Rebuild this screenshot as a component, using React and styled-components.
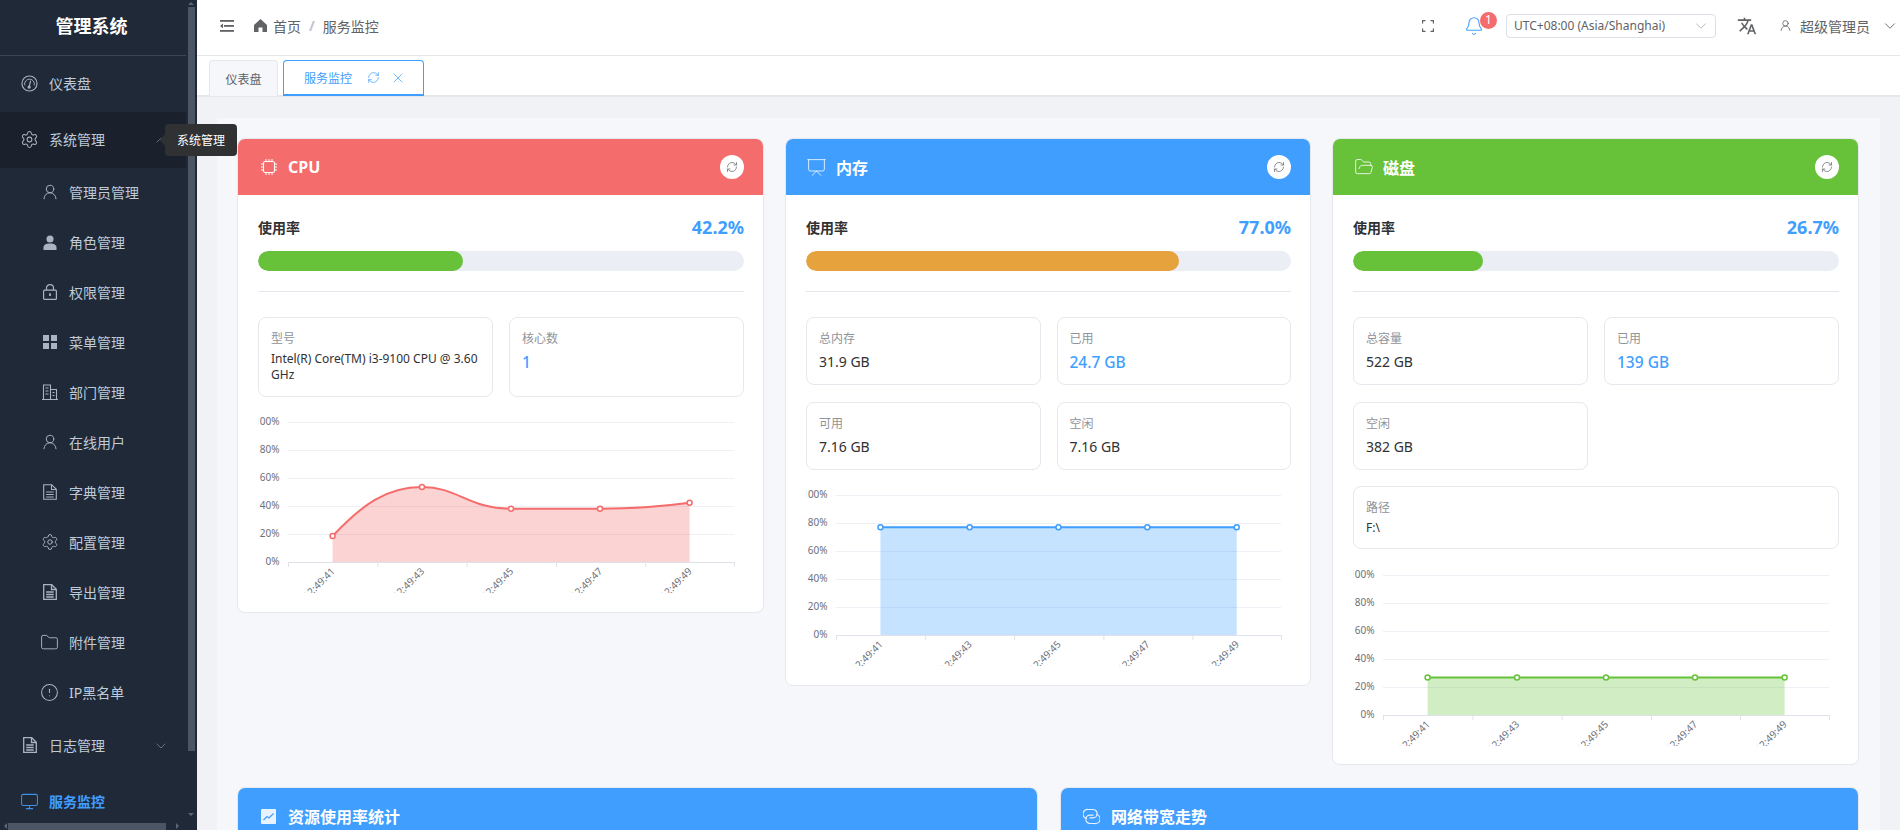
import React from "react";
import styled, { createGlobalStyle } from "styled-components";
import {
  Settings, UserRound, Folder, FolderOpen, CircleAlert, Monitor, RefreshCw, X,
  ChevronDown, ChevronUp, Bell, Presentation,
} from "lucide-react";
import { MdTranslate } from "react-icons/md";

const Global = createGlobalStyle`
  html, body { margin: 0; padding: 0; height: 100%; overflow: hidden; background: #fff; }
  body { font-family: "Noto Sans", "Noto Sans CJK SC", sans-serif; font-size: 14px; color: #303133; }
  * { box-sizing: border-box; }
`;

const Shell = styled.div`
  display: grid;
  grid-template-columns: 197px 1fr;
  width: 1900px;
  height: 830px;
  overflow: hidden;
`;

const Sidebar = styled.aside`
  position: relative;
  background: #1f2937;
  height: 830px;
  z-index: 2;
`;
const SideInner = styled.div`
  width: 186px;
  height: 830px;
  overflow: hidden;
`;
const Logo = styled.div`
  height: 56px;
  border-bottom: 1px solid #3b4653;
  display: flex;
  align-items: center;
  justify-content: center;
  padding: 0 3px 5px 0;
  color: #fff;
  font-size: 18px;
  font-weight: 700;
`;
const MenuRow = styled.div`
  display: flex;
  align-items: center;
  height: ${(p) => (p.$sub ? 50 : 56)}px;
  padding-left: ${(p) => (p.$sub ? 42 : 21)}px;
  padding-bottom: 2px;
  gap: ${(p) => (p.$sub ? 12 : 11)}px;
  color: ${(p) => (p.$active ? "#409eff" : "#bfcbd9")};
  font-weight: ${(p) => (p.$active ? 600 : 400)};
  background: ${(p) => (p.$open ? "#1a212d" : "transparent")};
  font-size: 14px;
  white-space: nowrap;
  position: relative;
`;
const RowIcon = styled.span`
  display: inline-flex;
  align-items: center;
  justify-content: center;
  width: ${(p) => (p.$sub ? 15 : 17)}px;
  height: 18px;
  flex: none;
  color: ${(p) => (p.$active ? "#3f8fe6" : "#aab4c0")};
  & > svg {
    flex: none;
  }
`;
const Caret = styled.span`
  position: absolute;
  left: 153px;
  top: 50%;
  transform: translateY(-50%);
  display: inline-flex;
  color: #8b95a3;
`;
const VBar = styled.div`
  position: absolute;
  left: 188px;
  top: 7px;
  width: 7px;
  height: 744px;
  background: #4b5563;
`;
const HBar = styled.div`
  position: absolute;
  left: 8px;
  bottom: 0;
  width: 158px;
  height: 7px;
  background: #4b5563;
`;
const Arrow = styled.span`
  position: absolute;
  width: 0;
  height: 0;
  border: 3px solid transparent;
  left: ${(p) => p.$x}px;
  top: ${(p) => p.$y}px;
  ${(p) => `border-${p.$dir}-color: #5b6573;`}
`;
const Tip = styled.div`
  position: absolute;
  left: 165px;
  top: 124px;
  width: 72px;
  height: 32px;
  background: #303133;
  color: #fff;
  font-size: 12px;
  border-radius: 4px;
  display: flex;
  align-items: center;
  justify-content: center;
  &::before {
    content: "";
    position: absolute;
    left: -4px;
    top: 12px;
    width: 8px;
    height: 8px;
    background: #303133;
    transform: rotate(45deg);
  }
`;

const Main = styled.main`
  display: flex;
  flex-direction: column;
  min-width: 0;
  height: 830px;
`;
const Navbar = styled.header`
  height: 56px;
  flex: none;
  border-bottom: 1px solid #e5e7eb;
  background: #fff;
  display: flex;
  align-items: center;
  padding: 0 0 4px 23px;
  color: #606266;
`;
const Crumbs = styled.div`
  display: flex;
  align-items: center;
  margin-left: 20px;
  font-size: 14px;
  color: #606266;
`;
const CrumbHome = styled.span`
  display: inline-flex;
  align-items: center;
  gap: 6px;
`;
const Slash = styled.span`
  margin: 0 8px;
  color: #c0c4cc;
  font-weight: 700;
`;
const NavRight = styled.div`
  margin-left: auto;
  display: flex;
  align-items: center;
  padding-right: 1px;
  height: 100%;
`;
const BellWrap = styled.span`
  position: relative;
  display: inline-flex;
  margin-left: 30px;
  color: #409eff;
`;
const Badge = styled.span`
  position: absolute;
  left: 16px;
  top: -4px;
  width: 17px;
  height: 17px;
  border-radius: 50%;
  background: #f56c6c;
  color: #fff;
  font-size: 12px;
  line-height: 16px;
  text-align: center;
`;
const TzSelect = styled.div`
  width: 210px;
  height: 24px;
  margin-left: 22px;
  border: 1px solid #dcdfe6;
  border-radius: 4px;
  display: flex;
  align-items: center;
  justify-content: space-between;
  padding: 0 5px 0 7px;
  font-size: 12px;
  color: #606266;
`;
const Lang = styled.span`
  display: inline-flex;
  margin-left: 21px;
  color: #606266;
`;
const UserBox = styled.div`
  display: flex;
  align-items: center;
  margin-left: 22px;
  font-size: 14px;
  color: #606266;
  gap: 8px;
`;
const TabBar = styled.div`
  height: 41px;
  flex: none;
  background: #fff;
  border-bottom: 2px solid #e5e7eb;
  display: flex;
  align-items: flex-start;
  gap: 5px;
  padding: 4px 0 0 12px;
`;
const Tab = styled.div`
  height: 36px;
  display: flex;
  align-items: center;
  font-size: 12px;
  border-radius: 4px 4px 0 0;
  ${(p) =>
    p.$active
      ? `
    width: 141px; padding-left: 20px; color: #409eff; background: #fff;
    border: 1px solid #409eff; border-bottom-width: 2px; gap: 0;
  `
      : `
    width: 69px; justify-content: center; color: #606266; background: #f5f7fa;
    border: 1px solid #e5e7eb; border-bottom: none;
  `}
`;
const TabIcons = styled.span`
  display: inline-flex;
  align-items: center;
  gap: 10px;
  margin-left: 15px;
`;
const Content = styled.div`
  flex: 1;
  min-height: 0;
  overflow: hidden;
  background: #f0f2f5;
  padding: 21px 20px 0;
`;
const Panel = styled.div`
  background: #f5f7fa;
  padding: 20px 21px 20px 20px;
`;
const Row3 = styled.div`
  display: grid;
  grid-template-columns: 527fr 526fr 527fr;
  gap: 21px;
  align-items: start;
`;
const Row2 = styled.div`
  display: grid;
  grid-template-columns: 801fr 799fr;
  gap: 22px;
  margin-top: 22px;
  align-items: start;
`;
const Card = styled.section`
  background: #fff;
  border: 1px solid #e6e8ee;
  border-radius: 8px;
  overflow: hidden;
`;
const CardHead = styled.div`
  height: 56px;
  background: ${(p) => p.$color};
  display: flex;
  align-items: center;
  padding: 0 19px 0 22px;
  color: #fff;
`;
const HeadIcon = styled.span`
  display: inline-flex;
  width: 17px;
  justify-content: center;
  margin-right: 11px;
  color: rgba(255, 255, 255, 0.82);
  & > svg {
    flex: none;
  }
`;
const CardTitle = styled.h3`
  margin: 0;
  font-size: 16px;
  font-weight: 700;
  color: #fff;
`;
const RoundBtn = styled.span`
  margin-left: auto;
  width: 24px;
  height: 24px;
  border-radius: 50%;
  background: #fff;
  color: #606266;
  display: inline-flex;
  align-items: center;
  justify-content: center;
`;
const CardBody = styled.div`
  padding: 20px 19px 18.5px 20px;
`;
const UsageRow = styled.div`
  display: flex;
  align-items: center;
  justify-content: space-between;
  height: 24px;
  margin-bottom: 12px;
`;
const UsageLabel = styled.span`
  font-size: 14px;
  font-weight: 600;
  color: #303133;
`;
const UsageValue = styled.span`
  font-size: 18px;
  font-weight: 700;
  color: #409eff;
`;
const Track = styled.div`
  height: 20px;
  border-radius: 10px;
  background: #ebeef5;
  overflow: hidden;
`;
const Fill = styled.div`
  height: 100%;
  border-radius: 10px;
  background: ${(p) => p.$color};
`;
const Divider = styled.div`
  height: 1px;
  background: #e4e7ed;
  margin: 20px 0 25px;
`;
const Stats = styled.div`
  display: grid;
  grid-template-columns: 1fr 1fr;
  gap: 16.5px 16px;
`;
const Stat = styled.div`
  border: 1px solid #e6e8ee;
  border-radius: 8px;
  padding: 13px 12px 12px;
  grid-column: ${(p) => (p.$wide ? "1 / 3" : "auto")};
`;
const StatLabel = styled.div`
  font-size: 12px;
  line-height: 16px;
  color: #909399;
  margin-bottom: 4px;
`;
const StatValue = styled.div`
  font-size: ${(p) => (p.$small ? 12 : p.$blue ? 15.5 : 14)}px;
  line-height: ${(p) => (p.$small ? 16.25 : p.$blue ? 19 : 21)}px;
  padding-top: ${(p) => (p.$blue ? 2 : 0)}px;
  font-weight: ${(p) => (p.$blue ? 500 : 400)};
  color: ${(p) => (p.$blue ? "#409eff" : "#303133")};
`;
const ChartBox = styled.svg`
  display: block;
  width: 100%;
  height: 180px;
  margin-top: 16.5px;
  overflow: hidden;
`;
const AxisText = styled.text`
  font-size: 10px;
  fill: #6e7079;
`;

const GRID = [9, 37, 65, 93, 121, 149];
const LABELS = ["100%", "80%", "60%", "40%", "20%", "0%"];
const TICKS = [30, 119.4, 208.6, 298, 387.2, 476];
const XS = [74.6, 164, 253, 342, 431.6];
const TIMES = ["12:49:41", "12:49:43", "12:49:45", "12:49:47", "12:49:49"];

function Chart({ color, fillColor, ys, line }) {
  const d = line || `M${XS.map((x, i) => `${x} ${ys[i]}`).join(" L")}`;
  return (
    <ChartBox viewBox="0 0 486 180" preserveAspectRatio="none">
      {GRID.map((y, i) =>
        i < 5 ? <line key={y} x1="30" x2="476" y1={y + 0.5} y2={y + 0.5} stroke="#eef0f5" /> : null
      )}
      {GRID.map((y, i) => (
        <AxisText key={y} x="21.6" y={y + 3} textAnchor="end">
          {LABELS[i]}
        </AxisText>
      ))}
      <path d={`${d} L${XS[4]} 149 L${XS[0]} 149 Z`} fill={fillColor} />
      <line x1="30" x2="476" y1="149.5" y2="149.5" stroke="#dfe2ea" />
      {TICKS.map((x) => (
        <line key={x} x1={x + 0.5} x2={x + 0.5} y1="149" y2="154" stroke="#dfe2ea" />
      ))}
      <path d={d} fill="none" stroke={color} strokeWidth="2" />
      {XS.map((x, i) => (
        <circle key={x} cx={x} cy={ys[i]} r="2.5" fill="#fff" stroke={color} strokeWidth="1.5" />
      ))}
      {XS.map((x, i) => (
        <AxisText key={x} x="0" y="0" textAnchor="end" transform={`translate(${x + 3} 159) rotate(-45)`}>
          {TIMES[i]}
        </AxisText>
      ))}
    </ChartBox>
  );
}

const Odometer = () => (
  <svg width="17" height="17" viewBox="0 0 18 18" fill="none" stroke="currentColor" strokeWidth="1.2">
    <circle cx="9" cy="9" r="8" />
    <path d="M4 11a5.200 5.200 0 1 1 10 0" strokeWidth="1" />
    <path d="M10.200 6 8.800 12" />
    <circle cx="8.600" cy="12.800" r="1.100" fill="currentColor" />
  </svg>
);
const CpuChip = () => (
  <svg width="18" height="18" viewBox="0 0 18 18" fill="none" stroke="#fff" strokeWidth="1.100">
    <rect x="3.500" y="3.500" width="11" height="11" rx="1.800" />
    <path d="M6 1v2.500M9 1v2.500M12 1v2.500M6 14.500V17M9 14.500V17M12 14.500V17M1 6h2.500M1 9h2.500M1 12h2.500M14.500 6H17M14.500 9H17M14.500 12H17" strokeWidth="1" />
  </svg>
);
const UserFilled = () => (
  <svg width="14" height="15" viewBox="0 0 15 16" fill="currentColor">
    <circle cx="7.5" cy="4.2" r="3.8" />
    <path d="M0.5 16v-2.5c0-3 2.5-4.5 7-4.5s7 1.500 7 4.500V16Z" />
  </svg>
);
const LockIcon = () => (
  <svg width="14" height="16" viewBox="0 0 14 16" fill="none" stroke="currentColor" strokeWidth="1.200">
    <rect x=".6" y="6.100" width="12.800" height="9.300" rx="1" />
    <path d="M3.500 6V3.800a3.500 3.200 0 0 1 7 0V6" />
    <path d="M7 9.300v2.800" strokeWidth="1.800" />
  </svg>
);
const GridFilled = () => (
  <svg width="14" height="14" viewBox="0 0 14 14" fill="currentColor">
    <rect width="6" height="6" />
    <rect x="8" width="6" height="6" />
    <rect y="8" width="6" height="6" />
    <rect x="8" y="8" width="6" height="6" />
  </svg>
);
const Building = () => (
  <svg width="16" height="16" viewBox="0 0 16 16" fill="none" stroke="currentColor" strokeWidth="1.1">
    <path d="M0 15.500h16M1.500 15.500V1h7v14.500M8.500 5.500h6v10" />
    <path d="M3.500 4h3M3.500 7h3M3.500 10h3M10.500 8.500h2M10.500 11.500h2" />
  </svg>
);
const Tickets = ({ $w = 1.3 }) => (
  <svg width="14" height="16" viewBox="0 0 14 16" fill="none" stroke="currentColor" strokeWidth={$w}>
    <path d="M.7.7h8l4.600 4.600v10H.7Z" />
    <path d="M8.500.7v4.800h4.800M3.200 8h7.500M3.200 10.500h7.500M3.200 13h7.500" />
  </svg>
);
const HomeFilled = () => (
  <svg width="13" height="13" viewBox="0 0 13 13" fill="#606266">
    <path d="M6.500 0 13 6v7H8.500V8.500h-4V13H0V6Z" />
  </svg>
);
const Fold = () => (
  <svg width="14" height="12" viewBox="0 0 14 12" fill="#606266" style={{ flex: "none" }}>
    <rect width="14" height="1.800" />
    <rect x="4" y="5" width="10" height="1.800" />
    <rect y="10" width="14" height="1.800" />
    <path d="M0 5.900 3 3.500v4.800Z" />
  </svg>
);
const FullScreen = () => (
  <svg width="12" height="12" viewBox="0 0 12 12" fill="none" stroke="#606266" strokeWidth="1.2">
    <path d="M.6 3.500V.6h2.900M8.500.6h2.900v2.900M11.400 8.500v2.900H8.500M3.500 11.400H.6V8.500" />
  </svg>
);
const TrendBox = () => (
  <svg width="15" height="15" viewBox="0 0 15 15">
    <rect width="15" height="15" rx="1" fill="rgba(255,255,255,.88)" />
    <path d="M2.500 11 6 7.500 8 9l4.500-4.500" fill="none" stroke="#409eff" strokeWidth="1.200" />
  </svg>
);
const Connection = () => (
  <svg width="17" height="17" viewBox="0 0 17 17" fill="none" stroke="rgba(255,255,255,.85)" strokeWidth="1.200">
    <path d="M4 10.500A4.200 4.200 0 0 1 5 1.500h5a4.200 4.200 0 0 1 0 8.400H6.500" />
    <path d="M13 6.500a4.200 4.200 0 0 1-1 9H7a4.200 4.200 0 0 1 0-8.400h3.500" />
  </svg>
);

const SUBS = [
  ["管理员管理", <UserRound size={18} strokeWidth={1.3} />],
  ["角色管理", <UserFilled />],
  ["权限管理", <LockIcon />],
  ["菜单管理", <GridFilled />],
  ["部门管理", <Building />],
  ["在线用户", <UserRound size={18} strokeWidth={1.3} />],
  ["字典管理", <Tickets $w={1.1} />],
  ["配置管理", <Settings size={18} strokeWidth={1.3} />],
  ["导出管理", <Tickets />],
  ["附件管理", <Folder size={19} strokeWidth={1.2} />],
  ["IP黑名单", <CircleAlert size={19} strokeWidth={1.3} />],
];

function Side() {
  return (
    <Sidebar>
      <SideInner>
        <Logo>管理系统</Logo>
        <MenuRow>
          <RowIcon>
            <Odometer />
          </RowIcon>
          仪表盘
        </MenuRow>
        <MenuRow $open>
          <RowIcon>
            <Settings size={19} strokeWidth={1.3} />
          </RowIcon>
          系统管理
          <Caret>
            <ChevronUp size={16} strokeWidth={1} />
          </Caret>
        </MenuRow>
        {SUBS.map(([t, icon]) => (
          <MenuRow $sub key={t}>
            <RowIcon $sub>{icon}</RowIcon>
            {t}
          </MenuRow>
        ))}
        <MenuRow>
          <RowIcon>
            <Tickets />
          </RowIcon>
          日志管理
          <Caret>
            <ChevronDown size={16} strokeWidth={1} />
          </Caret>
        </MenuRow>
        <MenuRow $active>
          <RowIcon $active>
            <Monitor size={19} strokeWidth={1.3} />
          </RowIcon>
          服务监控
        </MenuRow>
      </SideInner>
      <VBar />
      <HBar />
      <Arrow $dir="bottom" $x={188} $y={-1} />
      <Arrow $dir="top" $x={188} $y={813} />
      <Arrow $dir="right" $x={1} $y={823} />
      <Arrow $dir="left" $x={176} $y={823} />
      <Tip>系统管理</Tip>
    </Sidebar>
  );
}

function Nav() {
  return (
    <Navbar>
      <Fold />
      <Crumbs>
        <CrumbHome>
          <HomeFilled />
          首页
        </CrumbHome>
        <Slash>/</Slash>
        服务监控
      </Crumbs>
      <NavRight>
        <FullScreen />
        <BellWrap>
          <Bell size={20} strokeWidth={1.3} />
          <Badge>1</Badge>
        </BellWrap>
        <TzSelect>
          UTC+08:00 (Asia/Shanghai)
          <ChevronDown size={18} color="#a8abb2" strokeWidth={1.1} />
        </TzSelect>
        <Lang>
          <MdTranslate size={20} />
        </Lang>
        <UserBox>
          <UserRound size={13} strokeWidth={1.5} />
          超级管理员
          <ChevronDown size={18} strokeWidth={1.2} style={{ marginLeft: 3 }} />
        </UserBox>
      </NavRight>
    </Navbar>
  );
}

function MetricCard({ color, icon, title, pct, barColor, children }) {
  return (
    <Card>
      <CardHead $color={color}>
        <HeadIcon>{icon}</HeadIcon>
        <CardTitle>{title}</CardTitle>
        <RoundBtn>
          <RefreshCw size={12} strokeWidth={1.4} />
        </RoundBtn>
      </CardHead>
      <CardBody>
        <UsageRow>
          <UsageLabel>使用率</UsageLabel>
          <UsageValue>{pct}%</UsageValue>
        </UsageRow>
        <Track>
          <Fill $color={barColor} style={{ width: `${pct}%` }} />
        </Track>
        <Divider />
        {children}
      </CardBody>
    </Card>
  );
}

function StatBox({ label, value, blue, small, wide }) {
  return (
    <Stat $wide={wide}>
      <StatLabel>{label}</StatLabel>
      <StatValue $blue={blue} $small={small}>
        {value}
      </StatValue>
    </Stat>
  );
}

const flat = (y) => [y, y, y, y, y];

export default function App() {
  return (
    <>
      <Global />
      <Shell>
        <Side />
        <Main>
          <Nav />
          <TabBar>
            <Tab>仪表盘</Tab>
            <Tab $active>
              服务监控
              <TabIcons>
                <RefreshCw size={13} strokeWidth={1.3} />
                <X size={16} strokeWidth={1.1} />
              </TabIcons>
            </Tab>
          </TabBar>
          <Content>
            <Panel>
              <Row3>
                <MetricCard color="#f56c6c" barColor="#67c23a" pct="42.2" title="CPU" icon={<CpuChip />}>
                  <Stats>
                    <StatBox label="型号" value="Intel(R) Core(TM) i3-9100 CPU @ 3.60 GHz" small />
                    <StatBox label="核心数" value="1" blue />
                  </Stats>
                  <Chart
                    color="#f56c6c"
                    fillColor="rgba(245,108,108,.3)"
                    ys={[123, 74, 95.7, 95.7, 89.7]}
                    line="M74.6 123 C104 92 128 74 164 74 C200 74 210 95.7 253 95.7 C280 95.7 310 95.7 342 95.7 C375 95.700 400 94 431.6 89.700"
                  />
                </MetricCard>
                <MetricCard color="#409eff" barColor="#e6a23c" pct="77.0" title="内存" icon={<Presentation size={21} strokeWidth={1.1} />}>
                  <Stats>
                    <StatBox label="总内存" value="31.9 GB" />
                    <StatBox label="已用" value="24.7 GB" blue />
                    <StatBox label="可用" value="7.16 GB" />
                    <StatBox label="空闲" value="7.16 GB" />
                  </Stats>
                  <Chart color="#409eff" fillColor="rgba(64,158,255,.3)" ys={flat(41.2)} />
                </MetricCard>
                <MetricCard color="#67c23a" barColor="#67c23a" pct="26.7" title="磁盘" icon={<FolderOpen size={20} strokeWidth={1.2} />}>
                  <Stats>
                    <StatBox label="总容量" value="522 GB" />
                    <StatBox label="已用" value="139 GB" blue />
                    <StatBox label="空闲" value="382 GB" />
                    <span />
                    <StatBox label="路径" value="F:\" small wide />
                  </Stats>
                  <Chart color="#67c23a" fillColor="rgba(103,194,58,.3)" ys={flat(111.6)} />
                </MetricCard>
              </Row3>
              <Row2>
                <Card>
                  <CardHead $color="#409eff">
                    <HeadIcon>
                      <TrendBox />
                    </HeadIcon>
                    <CardTitle>资源使用率统计</CardTitle>
                  </CardHead>
                </Card>
                <Card>
                  <CardHead $color="#409eff">
                    <HeadIcon>
                      <Connection />
                    </HeadIcon>
                    <CardTitle>网络带宽走势</CardTitle>
                  </CardHead>
                </Card>
              </Row2>
            </Panel>
          </Content>
        </Main>
      </Shell>
    </>
  );
}
